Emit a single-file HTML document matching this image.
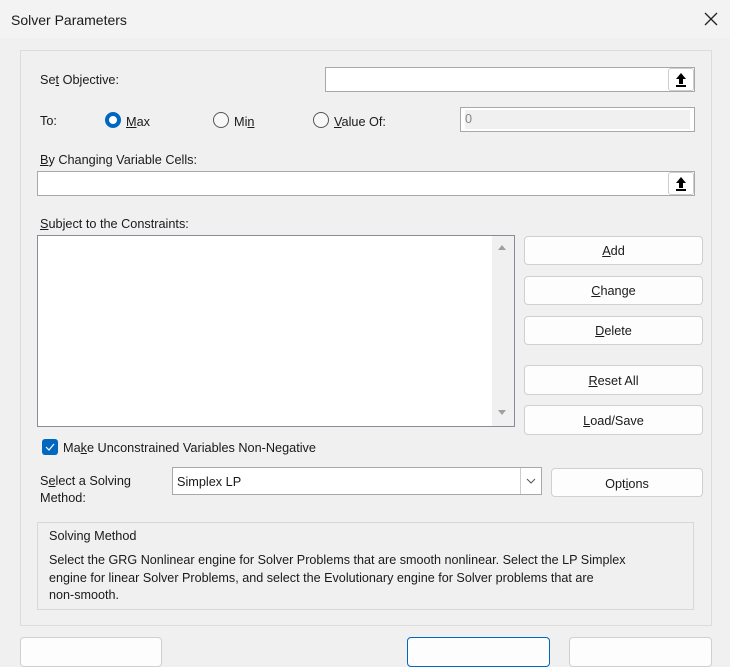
<!DOCTYPE html>
<html><head><style>
*{box-sizing:border-box;margin:0;padding:0}
body{width:730px;height:646px;background:#f0f0f0;font-family:"Liberation Sans",sans-serif;font-size:12.7px;color:#1a1a1a;position:relative;overflow:hidden}
.a{position:absolute}
.title{left:0;top:0;width:730px;height:38px;background:#f3f3f3}
.in{background:#fff;border:1px solid #a8a8a8}
.btn{background:#fdfdfd;border:1px solid #d0d0d0;border-radius:4px;text-align:center;font-size:12.7px}
u{text-decoration:underline}
.rad{width:16px;height:16px;border-radius:50%;border:1px solid #555;background:#f7f7f7}
.up{width:26px;height:23px;background:#fff;border:1px solid #ccc;border-radius:3px}
</style></head><body>
<div class="a title"></div>
<div class="a" style="left:11px;top:12px;font-size:14px">Solver Parameters</div>
<svg class="a" style="left:704px;top:12px" width="14" height="14"><path d="M1 1L13 13M13 1L1 13" stroke="#222" stroke-width="1.3"/></svg>
<div class="a" style="left:20px;top:50px;width:692px;height:576px;border:1px solid #dcdcdc"></div>

<div class="a" style="left:40px;top:73px">Se<u>t</u> Objective:</div>
<div class="a in" style="left:325px;top:67px;width:370px;height:25px"></div>
<div class="a up" style="left:668px;top:68px"><svg width="24" height="21"><path d="M12 4L7 10H10V15H14V10H17Z" fill="#000"/><rect x="7" y="16" width="10" height="2" fill="#000"/></svg></div>

<div class="a" style="left:40px;top:114px">To:</div>
<div class="a rad" style="left:105px;top:112px;border:4px solid #0067c0;background:#fff"></div>
<div class="a" style="left:126px;top:115px"><u>M</u>ax</div>
<div class="a rad" style="left:213px;top:112px"></div>
<div class="a" style="left:234px;top:115px">Mi<u>n</u></div>
<div class="a rad" style="left:313px;top:112px"></div>
<div class="a" style="left:334px;top:115px"><u>V</u>alue Of:</div>
<div class="a" style="left:460px;top:107px;width:235px;height:25px;border:1px solid #a8a8a8;background:#fff;padding:2px 4px"><div style="background:#f0f0f0;height:19px;color:#888;padding:2px 0 0 0">0</div></div>

<div class="a" style="left:40px;top:153px"><u>B</u>y Changing Variable Cells:</div>
<div class="a in" style="left:37px;top:171px;width:658px;height:25px"></div>
<div class="a up" style="left:668px;top:172px"><svg width="24" height="21"><path d="M12 4L7 10H10V15H14V10H17Z" fill="#000"/><rect x="7" y="16" width="10" height="2" fill="#000"/></svg></div>

<div class="a" style="left:40px;top:217px"><u>S</u>ubject to the Constraints:</div>
<div class="a" style="left:37px;top:235px;width:478px;height:192px;border:1px solid #8a8a99;background:#fff"></div>
<div class="a" style="left:492px;top:236px;width:22px;height:190px;background:#f0f0f0"></div>
<svg class="a" style="left:497px;top:243px" width="10" height="8"><path d="M1 7L5 2L9 7Z" fill="#a0a0a0"/></svg>
<svg class="a" style="left:497px;top:409px" width="10" height="8"><path d="M1 1L5 6L9 1Z" fill="#a0a0a0"/></svg>

<div class="a btn" style="left:524px;top:236px;width:179px;height:29px;line-height:29px"><u>A</u>dd</div>
<div class="a btn" style="left:524px;top:276px;width:179px;height:29px;line-height:29px"><u>C</u>hange</div>
<div class="a btn" style="left:524px;top:316px;width:179px;height:29px;line-height:29px"><u>D</u>elete</div>
<div class="a btn" style="left:524px;top:365px;width:179px;height:30px;line-height:30px"><u>R</u>eset All</div>
<div class="a btn" style="left:524px;top:405px;width:179px;height:30px;line-height:30px"><u>L</u>oad/Save</div>

<div class="a" style="left:42px;top:439px;width:16px;height:16px;background:#0067c0;border-radius:3px"><svg width="16" height="16"><path d="M4 8L7 11L12 5" stroke="#fff" stroke-width="1.2" fill="none"/></svg></div>
<div class="a" style="left:63px;top:441px">Ma<u>k</u>e Unconstrained Variables Non-Negative</div>

<div class="a" style="left:40px;top:473px;line-height:17px">S<u>e</u>lect a Solving<br>Method:</div>
<div class="a in" style="left:172px;top:467px;width:370px;height:28px;padding:7px 4px">Simplex LP</div>
<div class="a" style="left:520px;top:468px;width:21px;height:26px;border-left:1px solid #ccc;background:#fff"><svg width="20" height="26"><path d="M6 11L10 15L14 11" stroke="#555" fill="none"/></svg></div>
<div class="a btn" style="left:551px;top:468px;width:152px;height:29px;line-height:31px">Opt<u>i</u>ons</div>

<div class="a" style="left:37px;top:522px;width:657px;height:88px;border:1px solid #d8d8d8"></div>
<div class="a" style="left:49px;top:529px">Solving Method</div>
<div class="a" style="left:49px;top:552px;line-height:17.5px;font-size:12.6px;width:640px">Select the GRG Nonlinear engine for Solver Problems that are smooth nonlinear. Select the LP Simplex<br>engine for linear Solver Problems, and select the Evolutionary engine for Solver problems that are<br>non-smooth.</div>

<div class="a btn" style="left:20px;top:637px;width:142px;height:30px"></div>
<div class="a btn" style="left:407px;top:637px;width:143px;height:30px;border:1px solid #0067c0"></div>
<div class="a btn" style="left:569px;top:637px;width:143px;height:30px"></div>
</body></html>
